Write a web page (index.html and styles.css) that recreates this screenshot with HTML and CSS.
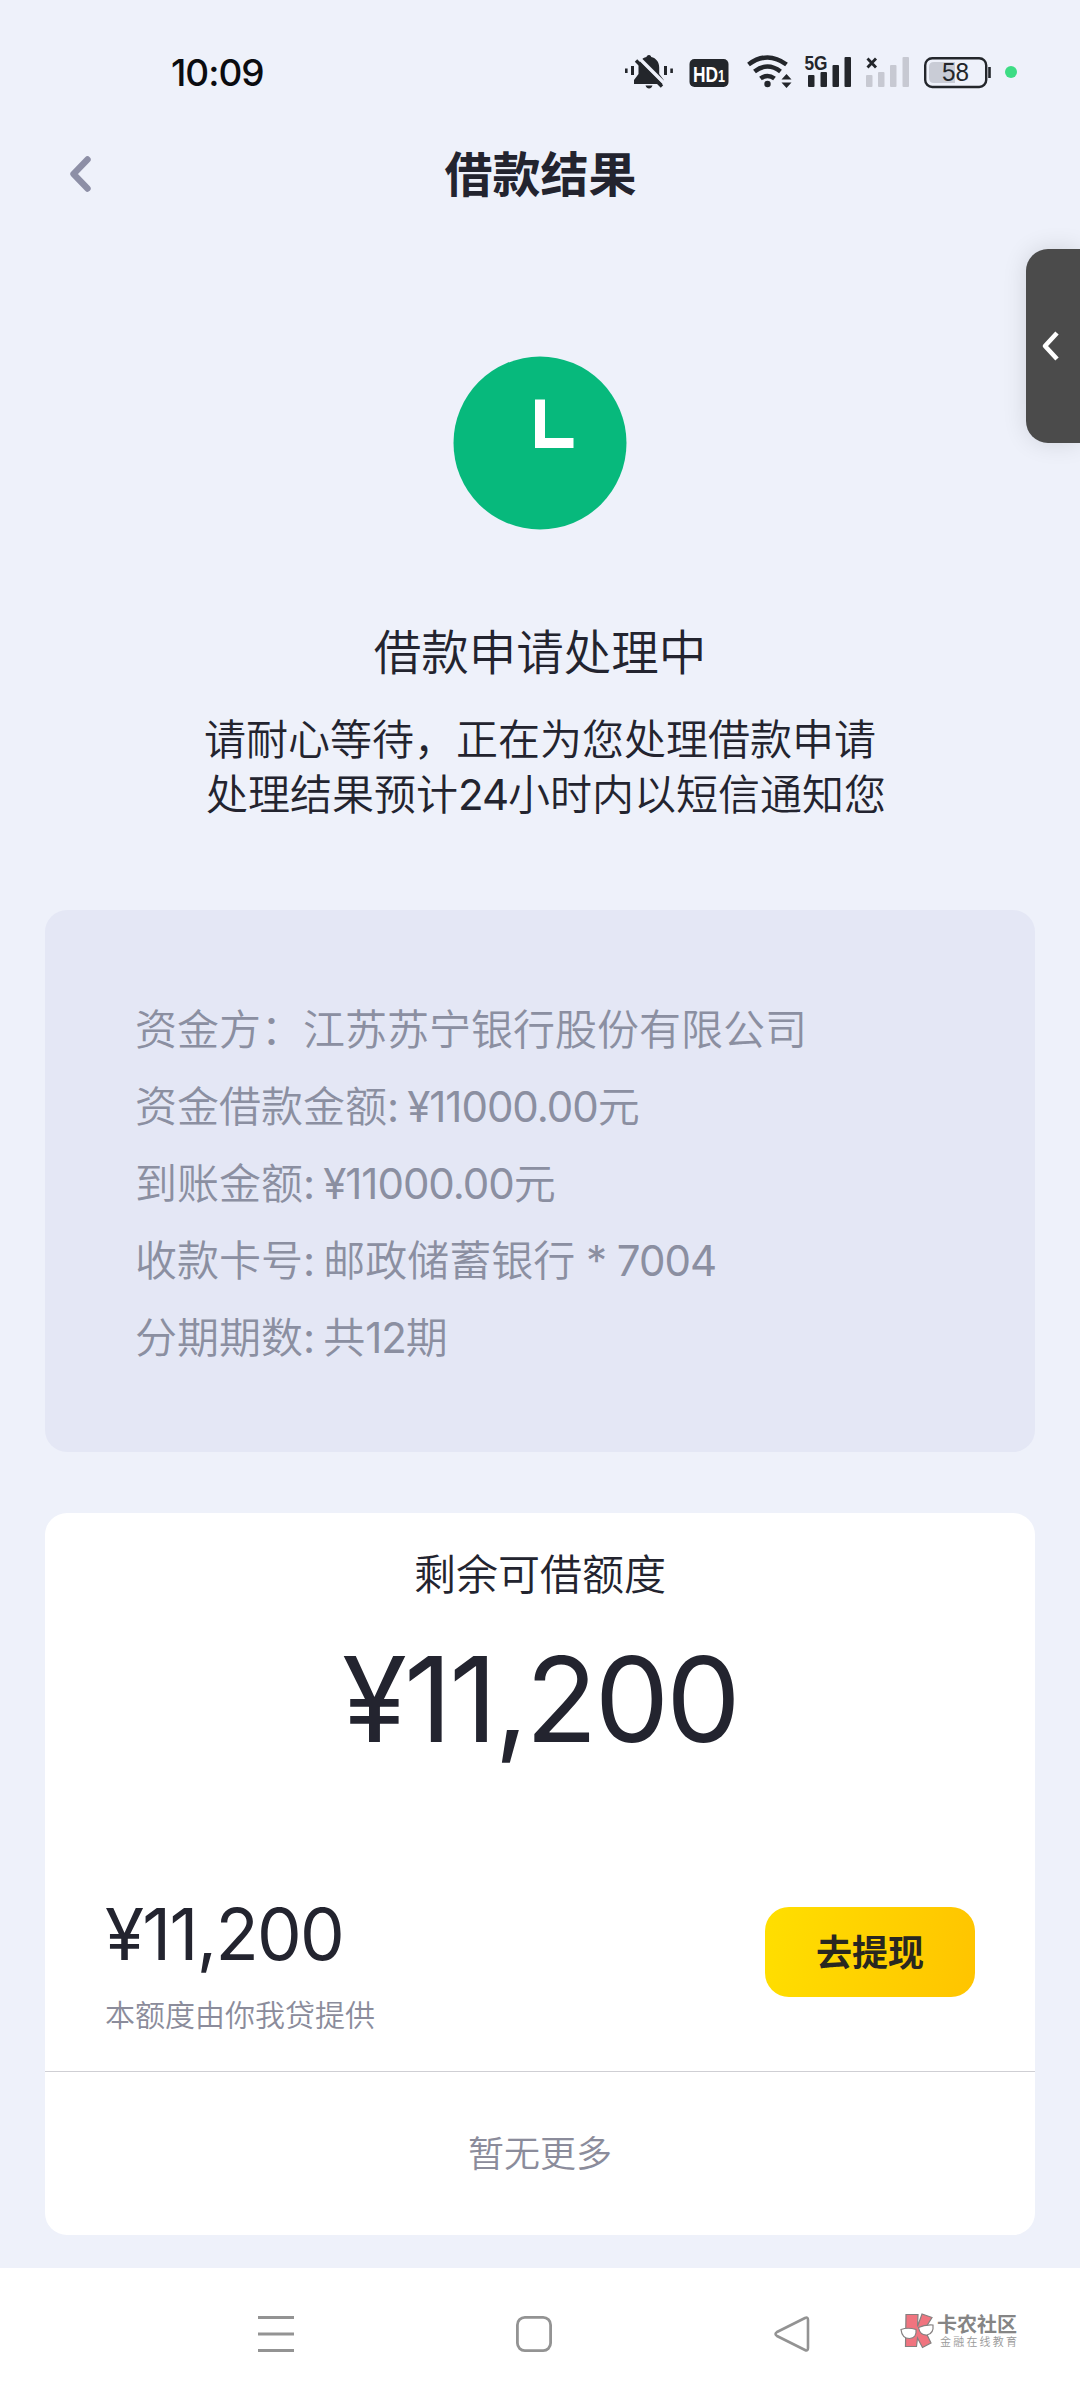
FILE: index.html
```html
<!DOCTYPE html>
<html lang="zh-CN">
<head>
<meta charset="utf-8">
<title>借款结果</title>
<link rel="stylesheet" href="styles.css">
</head>
<body>
<div class="screen">
  <header class="status">
    <span class="time">10:09</span>
    <svg class="status-icons" width="400" height="40" viewBox="620 50 400 40" role="img" aria-label="状态">
      <g fill="#23262b">
        <path d="M649 55c1.500 0 2 1 2.200 2 5 1.200 8 5 8 10.500v6.500l4.500 6v4H634v-4l4.500-6v-6.500c0-5.500 3-9.300 8-10.500.2-1 .9-2 2.500-2z"/>
        <path d="M645.500 85.500h7q-1 3-3.500 3t-3.500-3z"/>
        <rect x="625" y="68.500" width="2.600" height="4.500"/><rect x="631" y="66" width="3" height="9"/>
        <rect x="664" y="66" width="3" height="9"/><rect x="670.300" y="68.500" width="2.600" height="4.500"/>
        <rect x="689.500" y="59" width="39" height="28" rx="5"/>
        <circle cx="767.500" cy="84" r="3.200"/>
        <path d="M786.500 74l5 5.500h-10zM786.500 88l5-5.500h-10z"/>
        <rect x="808" y="75" width="6.500" height="12" rx="1"/><rect x="820.500" y="72" width="6.500" height="15" rx="1"/><rect x="832.500" y="65" width="6.500" height="22" rx="1"/><rect x="844.500" y="57" width="6.500" height="30" rx="1"/>
      </g>
      <path d="M638.500 57.500l26 26" stroke="#eef1fa" stroke-width="3.500"/>
      <path d="M636 60.500l26 26" stroke="#23262b" stroke-width="3.400"/>
      <text class="hd" x="693" y="81.500" textLength="32" lengthAdjust="spacingAndGlyphs">HD<tspan class="hd-one">1</tspan></text>
      <g fill="none" stroke="#23262b" stroke-width="4.600">
        <path d="M748.500 64.500q19-14 38 0"/><path d="M754.500 71.500q13-10 26 0"/><path d="M760.500 78.500q7-5 14 0"/>
      </g>
      <text class="net" x="804.500" y="70" textLength="23" lengthAdjust="spacingAndGlyphs">5G</text>
      <g fill="#c7c9d2"><rect x="866" y="75" width="6.500" height="12" rx="1"/><rect x="878" y="72" width="6.500" height="15" rx="1"/><rect x="890" y="65" width="6.500" height="22" rx="1"/><rect x="902.500" y="57" width="6.500" height="30" rx="1"/></g>
      <path d="M867.500 58.500l8.500 9m0-9l-8.500 9" stroke="#23262b" stroke-width="2.800"/>
      <path d="M934 62h21v21h-21q-5 0-5-5V67q0-5 5-5z" fill="#c9ccd6"/>
      <rect x="925.200" y="58.200" width="61" height="28.800" rx="7" fill="none" stroke="#23262b" stroke-width="2.400"/>
      <path d="M989.500 67v11" stroke="#23262b" stroke-width="2.600"/>
      <text class="charge" x="955.500" y="81" text-anchor="middle" textLength="27" lengthAdjust="spacingAndGlyphs">58</text>
      <circle cx="1011" cy="72" r="6" fill="#3ddc84"/>
    </svg>
  </header>

  <nav class="titlebar">
    <svg class="back" width="28" height="42" viewBox="0 0 28 42"><path d="M21.500 6.500L7.500 21l14 14.500" fill="none" stroke="#8d8fa6" stroke-width="6.400" stroke-linecap="round" stroke-linejoin="round"/></svg>
    <h1>借款结果</h1>
  </nav>

  <aside class="side-tab">
    <svg width="18" height="30" viewBox="0 0 18 30"><path d="M16 2L4 15l12 13" fill="none" stroke="#fff" stroke-width="4.600" stroke-linejoin="round"/></svg>
  </aside>

  <main>
    <section class="result">
      <svg class="clock" width="174" height="174" viewBox="0 0 174 174"><circle cx="87" cy="87" r="86.500" fill="#07b97c"/><path d="M87 43.500v43.500h33.500" fill="none" stroke="#fff" stroke-width="10"/></svg>
      <h2>借款申请处理中</h2>
      <p class="hint">请耐心等待，正在为您处理借款申请</p>
      <p class="hint hint-second">处理结果预计<span class="num">24</span>小时内以短信通知您</p>
    </section>

    <section class="details">
      <p>资金方：江苏苏宁银行股份有限公司</p>
      <p>资金借款金额<span class="colon">: </span><span class="num">¥11000.00</span>元</p>
      <p>到账金额<span class="colon">: </span><span class="num">¥11000.00</span>元</p>
      <p>收款卡号<span class="colon">: </span>邮政储蓄银行<span class="num"> * 7004</span></p>
      <p>分期期数<span class="colon">: </span>共<span class="num">12</span>期</p>
    </section>

    <section class="quota">
      <h3>剩余可借额度</h3>
      <div class="total num">¥11,200</div>
      <div class="offer">
        <div>
          <div class="amount num">¥11,200</div>
          <div class="provider">本额度由你我贷提供</div>
        </div>
        <button class="withdraw">去提现</button>
      </div>
      <div class="more">暂无更多</div>
    </section>
  </main>

  <footer class="navbar">
    <svg width="36" height="36" viewBox="0 0 36 36"><path d="M0 1.500h36M0 18h36M0 34.500h36" stroke="#939393" stroke-width="3"/></svg>
    <svg width="36" height="36" viewBox="0 0 36 36"><rect x="1.400" y="1.400" width="33.200" height="33.200" rx="7.500" fill="none" stroke="#939393" stroke-width="2.800"/></svg>
    <svg width="36" height="36" viewBox="0 0 36 36"><path d="M31 2q3-1.500 3 2v28q0 3.500-3 2L3 20q-3-2 0-4z" fill="none" stroke="#939393" stroke-width="2.600" stroke-linejoin="round"/></svg>
    <div class="brand">
      <svg width="36" height="38" viewBox="0 0 36 38"><path d="M6 2.500h12l-.5 12L22 2l10 3.500-7.500 12L31 31l-8.500 4.500-5-9.500-1 8.500H5.500z" fill="#f0747f" stroke="#858080" stroke-width="1.200"/><path d="M1 17.500q7-2.500 15 0 1 8.500-6.500 9-7.500 0-8.500-9zM18.500 15.500q6-3 14.500-2.500 1 8.500-6 10-7 .5-8.500-7.500z" fill="#fff" stroke="#858080" stroke-width="1.200"/></svg>
      <div><div class="brand-name">卡农社区</div><div class="brand-sub">金融在线教育</div></div>
    </div>
  </footer>
</div>
</body>
</html>
```

FILE: styles.css
```css
* { box-sizing: border-box; }
body { margin: 0; background: #eef1fa; font-family: Inter, "Noto Sans CJK SC", sans-serif; font-weight: 350; color: #23242f; }
h1, h2, h3, p { margin: 0; font-weight: 350; }
svg { display: block; flex: none; }
.num { font-weight: 400; letter-spacing: -.024em; }
.colon { font-weight: 400; letter-spacing: -.045em; }
.screen { width: 1080px; height: 2400px; display: flex; flex-direction: column; position: relative; overflow: hidden; }

.status { height: 130px; padding: 50px 60px 0 171px; display: flex; justify-content: space-between; align-items: flex-start; }
.time { font-size: 37px; line-height: 46px; font-weight: 500; color: #0b0c10; letter-spacing: -1px; }
.hd { font: 700 22px "Liberation Sans", sans-serif; fill: #fff; }
.hd-one { font-size: 16px; }
.net { font: 700 21px "Liberation Sans", sans-serif; fill: #23262b; }
.charge { font: 400 25px "Liberation Sans", sans-serif; fill: #23262b; }

.titlebar { height: 90px; padding: 0 66px 0 67px; display: grid; grid-template-columns: 28px 1fr 28px; align-items: center; }
.titlebar h1 { font-size: 48px; line-height: 88px; font-weight: 700; text-align: center; }
.back { margin: -2px 0 0 -1px; }

.side-tab { position: absolute; right: 0; top: 249px; width: 54px; height: 194px; padding-left: 15px; display: flex; align-items: center; background: #4b4b4b; border-radius: 22px 0 0 22px; box-shadow: 0 0 24px rgba(0,0,0,.12); }

main { flex: 1; padding: 0 45px; }
.result { height: 690px; padding-top: 136px; display: flex; flex-direction: column; align-items: center; }
.result h2 { margin-top: 88px; font-size: 47.500px; line-height: 70px; }
.hint { font-size: 42px; line-height: 55px; white-space: nowrap; }
.result h2 + .hint { margin-top: 24px; }
.hint-second { padding-left: 12px; }

.details { height: 542px; padding: 81px 91px 81px 90px; background: #e4e7f5; border-radius: 22px; color: #8b8fa1; }
.details p { font-size: 42px; line-height: 77px; white-space: pre; }

.quota { margin-top: 61px; height: 722px; background: #fff; border-radius: 22px; }
.quota h3 { padding-top: 31px; font-size: 42px; line-height: 62px; text-align: center; }
.total { height: 140px; margin-top: 23px; font-size: 118px; line-height: 140px; text-align: center; }
.offer { height: 303px; padding: 122px 60px 0; display: flex; justify-content: space-between; border-bottom: 1px solid #cfcfd4; }
.amount { font-size: 71px; line-height: 86px; }
.provider { margin-top: 16px; font-size: 30px; line-height: 44px; color: #8b8c9b; }
.withdraw { width: 210px; height: 90px; margin-top: 16px; padding: 0 0 5px; border: 0; border-radius: 24px; background: linear-gradient(100deg, #ffdf00, #ffc400); font: 700 36px Inter, "Noto Sans CJK SC", sans-serif; color: #292720; }
.more { line-height: 164px; font-size: 36px; text-align: center; color: #8b8c9b; }

.navbar { height: 132px; padding: 48px 60px 0 258px; display: flex; gap: 222px; align-items: flex-start; background: #fff; }
.brand { display: flex; margin: -4px 0 0 -132px; gap: 1px; }
.brand-name { margin-top: 3px; font-size: 20px; line-height: 20px; font-weight: 700; color: #858585; }
.brand-sub { margin: 0 0 0 3px; font-size: 11px; line-height: 14px; letter-spacing: 2.200px; color: #999; white-space: nowrap; }
```
